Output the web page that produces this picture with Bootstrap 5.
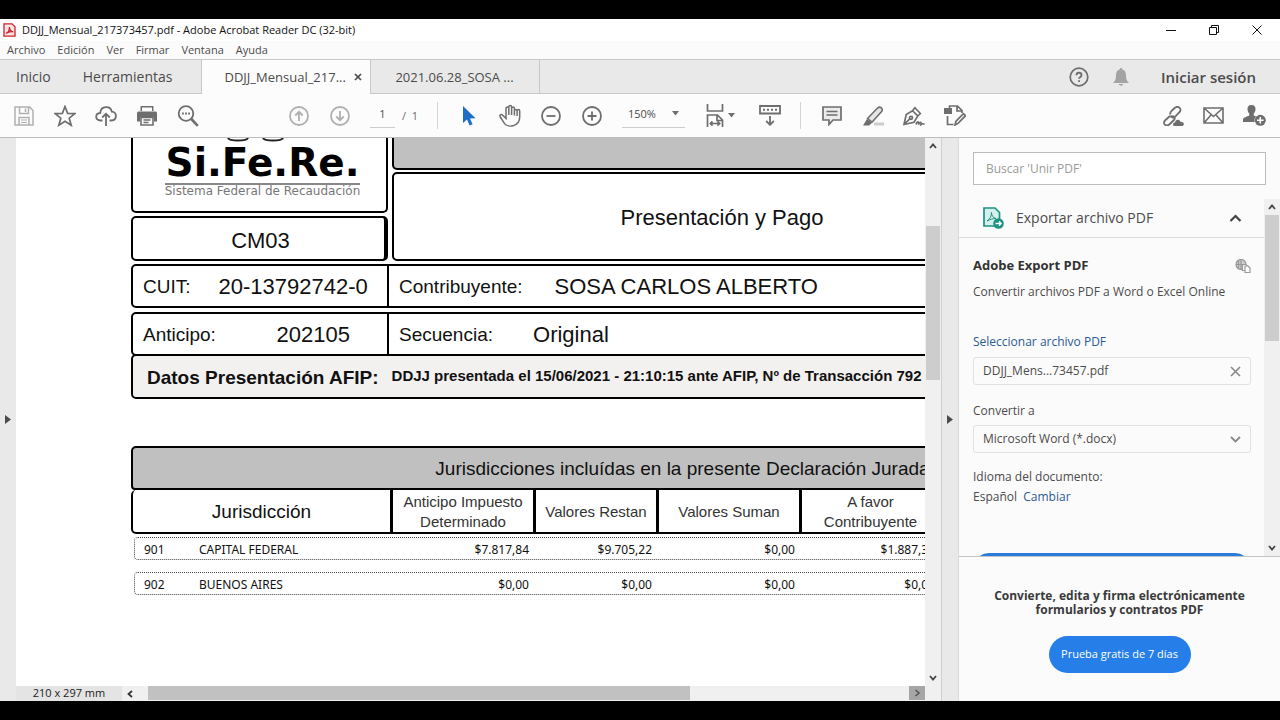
<!DOCTYPE html>
<html lang="es">
<head>
<meta charset="utf-8">
<meta name="viewport" content="width=device-width, initial-scale=1">
<title>DDJJ_Mensual_217373457.pdf - Adobe Acrobat Reader DC (32-bit)</title>
<link rel="stylesheet" href="https://cdn.jsdelivr.net/npm/bootstrap@5.3.0/dist/css/bootstrap.min.css">
<style>
  :root { --ink: #4b4b4b; --icon: #6e6e6e; --pale: #b0b0b0; --chrome: #e9e9e9; --line: #c8c8c8; --blue: #267ee8; }
  body { background: #000; color: var(--ink); font-family: "Open Sans", "Noto Sans", sans-serif; font-size: 12px; line-height: 16px; padding: 19px 0; }
  button { background: none; border: 0; padding: 0; color: inherit; }
  svg { display: block; fill: none; stroke: currentColor; flex: none; }
  .solid { fill: currentColor; stroke: none; }
  .window { background: #fcfcfc; }

  .titlebar { height: 22px; background: #fff; color: #111; font-size: 11px; padding: 0 2px 0 3px; }
  .titlebar span { padding-left: 6px; }
  .titlebar button { width: 43px; height: 20px; }
  .menubar { height: 19px; border-bottom: 1px solid var(--line); padding-left: 7px; gap: 12px; font-size: 11px; background: #fbfbfb; }
  .tabstrip { height: 34px; background: var(--chrome); border-bottom: 1px solid var(--line); font-size: 14px; }
  .tabstrip .doc-tab { border-right: 1px solid var(--line); height: 33px; width: 169px; font-size: 13px; }
  .tabstrip .is-open { background: #fcfcfc; height: 34px; border-left: 1px solid var(--line); width: 170px; padding-left: 23px; }
  .signin { font-size: 15px; font-weight: 600; }

  .toolbar { height: 44px; border-bottom: 1px solid #bdbdbd; padding: 0 5px 0 3px; color: var(--icon); font-size: 11px; }
  .tool { width: 41px; height: 40px; flex: none; display: flex; align-items: center; justify-content: center; }
  .group-gap { margin-left: 70px; }
  .pale { color: var(--pale); }
  .split { width: 1px; height: 27px; background: #d5d5d5; margin: 0 10px; }
  .page-no { width: 25px; border: 0; border-bottom: 1px solid #ccc; background: none; text-align: center; padding: 2px 0 5px; margin-left: 10px; color: var(--ink); }
  .page-total { width: 32px; padding-left: 7px; white-space: nowrap; }
  .zoom-pick { border-bottom: 1px solid #ccc; width: 63px; margin: 0 15px 0 10px; padding: 2px 6px 5px; }
  select { appearance: none; border: 0; background: none; color: var(--ink); width: 100%; outline: 0; padding: 0; }

  .rail { width: 16px; background: var(--chrome); }
  .rail-right { width: 18px; border-left: 1px solid #cfcfcf; border-right: 1px solid #dadada; }
  .vbar { width: 16px; background: #f0f0f0; padding: 4px 0; }
  .vbar .thumb { background: #cdcdcd; width: 14px; }
  .statusbar { height: 15px; background: #f0f0f0; font-size: 11px; line-height: 14px; color: #222; }
  .statusbar .size { width: 106px; background: #e4e4e4; text-align: center; }
  .statusbar .prev { width: 26px; }
  .statusbar .thumb { width: 542px; background: #c1c1c1; height: 14px; }
  .statusbar .next { width: 16px; height: 14px; background: #a6a6a6; color: #555; }

  .paper { background: #fff; color: #111; font-family: "Liberation Sans", Arial, sans-serif; }
  .sheet { width: 1109px; margin-left: 115px; font-size: 19px; line-height: 24px; }
  .box { border: 2px solid #000; border-radius: 5px; background: #fff; display: flex; align-items: center; }
  .side { width: 257px; flex: none; }
  .big { font-size: 22px; }
  .fill-gray { background: #c0c0c0; }
  .logo { height: 75px; border-top: 0; border-radius: 0 0 5px 5px; flex-direction: column; padding-left: 6px; }
  .logo-name { font: bold 39px/40px "DejaVu Sans", sans-serif; color: #000; }
  .logo-sub { font: 12px/12px "DejaVu Sans", sans-serif; color: #777; border-top: 2px solid #888; }
  .code { height: 45px; border-right-width: 4px; margin-top: 3px; padding: 4px 0 0 4px; }
  .heading { height: 32px; border-top: 0; border-radius: 0 0 5px 5px; width: 660px; }
  .purpose { height: 89px; width: 660px; margin-top: 2px; padding-top: 2px; }
  .datarow { height: 44px; margin-top: 4px; }
  .datarow.first-row { margin-top: 3px; }
  .cell { height: 100%; display: flex; align-items: center; padding: 2px 0 0 10px; }
  .cell.side { width: 256px; border-right: 2px solid #000; }
  .period { padding-right: 37px; }
  .datarow.afip { height: 45px; background: #f3f0f0; font-weight: bold; padding: 2px 0 0 14px; margin-top: -2px; gap: 13px; white-space: nowrap; }
  .afip small { font-size: 15px; line-height: 20px; padding-bottom: 4px; }

  .tax { width: 1109px; table-layout: fixed; border-collapse: separate; border-spacing: 0; margin-top: 47px; }
  .tax th { font-weight: normal; text-align: center; }
  .tax .caption-cell { height: 44px; background: #c0c0c0; border: 2px solid #000; border-radius: 5px 5px 4px 4px; padding: 2px 6px 0 0; }
  .tax .heads th { height: 44px; border-bottom: 2px solid #000; border-right: 3px solid #000; font-size: 15px; line-height: 20px; padding: 2px 0 0; color: #333; }
  .tax .heads th:first-child { font-size: 19px; border-left: 2px solid #000; border-radius: 5px 0 0 5px; color: #111; }
  .tax tbody tr { font: 12px/14px "Noto Sans", sans-serif; }
  .tax tbody td, .tax tbody th { height: 35px; padding: 4px 7px 8px 0; text-align: right; vertical-align: middle; white-space: nowrap; }
  .tax tbody th { position: relative; text-align: left; padding-left: 13px; }
  .tax tbody th::before { content: ""; position: absolute; top: 3px; left: 3px; height: 23px; width: 1106px; border: 1px dotted #444; border-radius: 4px; }
  .tax tbody th span { display: inline-block; width: 55px; }

  .panel { width: 321px; background: #fbfbfb; }
  .search { margin: 14px; height: 33px; border: 1px solid #bcbcbc; border-radius: 0; padding: 0 12px; background: #fff; flex: none; }
  .search::placeholder { color: #9a9a9a; }
  .panel-head { height: 39px; border-bottom: 1px solid #dcdcdc; padding: 0 22px 0 24px; font-size: 14px; }
  .panel-body { padding: 18px 13px 0 14px; height: 318px; overflow: hidden; }
  .panel-body h2 { font-size: 13px; font-weight: bold; line-height: 18px; color: #333; margin: 0 0 2px; }
  .panel-body a { color: #2b5a94; text-decoration: none; }
  .pick { margin: 34px 0 7px; }
  .panel-body label { display: block; margin: 18px 0 6px; }
  .field { height: 28px; border: 1px solid #e1e1e1; border-radius: 3px; padding: 0 9px; }
  .cta { background: #2b7ade; height: 32px; border-radius: 16px; }
  .offer { border-top: 1px solid #c4c4c4; padding-top: 32px; }
  .offer p { font-size: 12px; font-weight: bold; line-height: 14px; color: #3a3a3a; margin: 0 0 19px; }
  .trial, .trial:hover { background: var(--blue); color: #fff; border-radius: 19px; height: 37px; width: 142px; font-size: 11px; border: 0; padding: 0; }
</style>
</head>
<body class="vh-100 d-flex flex-column overflow-hidden">
<div class="window d-flex flex-column flex-grow-1 overflow-hidden">

  <header class="titlebar d-flex align-items-center">
    <svg width="13" height="14" viewBox="0 0 13 14" color="#c8232c" stroke-width="1.3"><path fill="#fbe3e3" d="M1 .8h8l3 3v9.4H1z"/><path d="M3 10.500c2-1 3.600-4 3.500-6.600M6.500 4c0 2.500 1.500 4.500 3.800 4.800M3 10.500c2-1.500 5-2.200 7.300-1.700"/></svg>
    <span class="me-auto text-nowrap">DDJJ_Mensual_217373457.pdf - Adobe Acrobat Reader DC (32-bit)</span>
    <button class="d-flex align-items-center justify-content-center" aria-label="Minimizar"><svg width="10" height="10"><path d="M0 5.500h10"/></svg></button>
    <button class="d-flex align-items-center justify-content-center" aria-label="Restaurar"><svg width="10" height="10"><path d="M.5 2.500h7v7h-7zM2.500 2.500v-2h7v7h-2"/></svg></button>
    <button class="d-flex align-items-center justify-content-center" aria-label="Cerrar"><svg width="10" height="10"><path d="M.5.500l9 9M9.500.500l-9 9"/></svg></button>
  </header>

  <nav class="menubar d-flex align-items-center" aria-label="Menú">
    <button>Archivo</button><button>Edición</button><button>Ver</button><button>Firmar</button><button>Ventana</button><button>Ayuda</button>
  </nav>

  <nav class="tabstrip d-flex align-items-start" aria-label="Documentos">
    <div class="d-flex align-self-center ps-3"><button class="me-4 pe-2">Inicio</button><button class="me-4 pe-1">Herramientas</button></div>
    <div class="doc-tab is-open d-flex align-items-center gap-2"><button>DDJJ_Mensual_217...</button><button aria-label="Cerrar pestaña"><svg width="8" height="8" stroke-width="1.700"><path d="M1 1l6 6M7 1L1 7"/></svg></button></div>
    <button class="doc-tab text-center">2021.06.28_SOSA ...</button>
    <div class="ms-auto me-4 d-flex align-items-center align-self-center">
      <button aria-label="Ayuda" class="me-4"><svg width="20" height="20" color="#6e6e6e" stroke-width="1.700"><circle cx="10" cy="10" r="8.800"/><path d="M7.500 8.200c0-3.200 5-3.200 5 0 0 1.800-2.400 1.700-2.400 3.600M10.100 13.200v1.800" stroke-width="1.900"/></svg></button>
      <button aria-label="Notificaciones" class="me-4"><svg class="solid" color="#a3a3a3" width="16" height="18" viewBox="0 0 16 18"><path d="M8 0c.9 0 1.300.6 1.300 1.400C12 2 13 4.200 13 7c0 4 .7 6 3 8H0c2.300-2 3-4 3-8 0-2.800 1-5 3.700-5.600C6.700.600 7.100 0 8 0zM5.700 16h4.600c-.4 2.200-4.200 2.200-4.600 0z"/></svg></button>
      <button class="signin ms-2">Iniciar sesión</button>
    </div>
  </nav>

  <div class="toolbar d-flex align-items-center flex-shrink-0">
    <button class="tool pale" aria-label="Guardar"><svg width="20" height="20" stroke-width="1.500"><path d="M1 1h14.500L19 4.500V19H1zM5.500 1v6.500h9V1M5 19v-7.500h10V19M11.500 2.500v3.500"/><path d="M7 14h6M7 16.500h6" stroke-width="1"/></svg></button>
    <button class="tool" aria-label="Favoritos"><svg width="22" height="22" stroke-width="1.700"><path d="M11 1.500l2.600 6.800 7.300.3-5.700 4.600 2 7L11 16.200l-6.200 4 2-7L1.100 8.600l7.300-.3z"/></svg></button>
    <button class="tool" aria-label="Subir"><svg width="22" height="20" stroke-width="1.800"><path d="M7.500 14.500H5.600C-.400 14.300 0 7.300 5.200 7c.6-7.600 10.400-7.600 11.600-1.300 5.400.2 5.700 8.600-.4 8.800h-1.900M11 20V8M7.200 11.500L11 7.700l3.800 3.800"/></svg></button>
    <button class="tool" aria-label="Imprimir"><svg width="20" height="20"><path class="solid" d="M3.500 0h13v5h-13zM1.500 5.500h17A1.500 1.500 0 0120 7v8.500h-3V11H3v4.500H0V7a1.500 1.500 0 011.500-1.500z"/><path fill="#fcfcfc" stroke="none" d="M5 1.500h10v3.500H5z"/><path d="M4 11.500h12V19H4zM6.500 14h7M6.500 16.500h5" stroke-width="1.600"/></svg></button>
    <button class="tool" aria-label="Buscar"><svg width="22" height="22" stroke-width="1.800"><circle cx="9" cy="8.500" r="7.300"/><path d="M14.300 14l6.500 6.800" stroke-width="2.600"/><path d="M5 8.500h1.800M8.100 8.500h1.800M11.200 8.500H13" stroke-width="1.800"/></svg></button>
    <button class="tool pale group-gap" aria-label="Página anterior"><svg width="20" height="20" stroke-width="1.800"><circle cx="10" cy="10" r="9"/><path d="M10 15V6M6.300 9.500L10 5.800l3.700 3.700"/></svg></button>
    <button class="tool pale" aria-label="Página siguiente"><svg width="20" height="20" stroke-width="1.800"><circle cx="10" cy="10" r="9"/><path d="M10 5v9M6.300 10.500l3.700 3.700 3.700-3.700"/></svg></button>
    <input class="page-no" aria-label="Página" value="1"><span class="page-total">/&nbsp; 1</span>
    <span class="split"></span>
    <button class="tool" aria-label="Seleccionar"><svg width="14" height="20" color="#1f6fc9" class="solid"><path d="M1 0v17l4-3.500 2.600 6 3-1.300L8 12.500l5.500-.2z"/></svg></button>
    <button class="tool" aria-label="Mano"><svg width="22" height="23" stroke-width="1.500"><path d="M7 12V4.500c0-2 2.800-2 2.800 0V3c0-2 2.800-2 2.800 0v1.500c0-2 2.800-2 2.800 0V7c0-2 2.700-1.900 2.700 0M9.800 4.500V11M12.600 4v7M15.400 6v5.500M18.100 7c0-1.900 2.600-1.900 2.600 0v6c0 10-12.500 11.500-15.800 5.600L1.300 13c-1.200-2.200 1.200-3.400 2.500-1.800L7 14.500V12M18.100 7v5"/></svg></button>
    <button class="tool" aria-label="Alejar"><svg width="20" height="20" stroke-width="1.800"><circle cx="10" cy="10" r="9"/><path d="M5.500 10h9"/></svg></button>
    <button class="tool" aria-label="Acercar"><svg width="20" height="20" stroke-width="1.800"><circle cx="10" cy="10" r="9"/><path d="M5.500 10h9M10 5.500v9"/></svg></button>
    <label class="zoom-pick d-flex align-items-center"><select aria-label="Zoom"><option>150%</option></select><svg class="solid" width="7" height="5"><path d="M0 0h7L3.500 4.500z"/></svg></label>
    <button class="tool gap-1" aria-label="Ajustar página"><svg width="18" height="23" stroke-width="1.700"><path d="M1.500 0v7h15V0M1.500 23V11h10l5 5v7M11 11v5.500h5.500M4.500 19.500h9M6.500 17.300l-2.200 2.200 2.200 2.200M11.500 17.300l2.200 2.200-2.200 2.200"/></svg><svg class="solid" width="7" height="5"><path d="M0 0h7L3.500 4.500z"/></svg></button>
    <button class="tool ms-2" aria-label="Desplazamiento"><svg width="22" height="21" stroke-width="1.800"><path d="M1 1h20v7.500H1zM11 11v9M7.200 16l3.800 3.800 3.800-3.800"/><path d="M4 4.800h14" stroke-dasharray="2 2" stroke-width="2"/></svg></button>
    <span class="split"></span>
    <button class="tool" aria-label="Comentario"><svg width="20" height="20" stroke-width="1.700"><path fill="#ebebeb" d="M1 1h18v13h-8l-4 4.500V14H1z"/><path d="M4.500 5.500h11M4.500 9h11" stroke-width="1.300"/></svg></button>
    <button class="tool" aria-label="Resaltar"><svg width="22" height="20" stroke-width="1.600"><path d="M12 18h10" style="stroke:#ccc" stroke-width="3"/><path fill="#e4e4e4" d="M5.500 12.500L15.800 1.800c2.500-1.800 5.500.8 4 3.500L10 16.200z"/><path class="solid" d="M5 13l5 4-3 2.500H1z"/></svg></button>
    <button class="tool" aria-label="Firmar"><svg width="22" height="20" stroke-width="1.700"><path d="M1 18.500L3.200 8.500l6.300-3.800 5.300 5.300-3.800 6.300zM1.500 18l5.800-5.600M9.500 4.700L12.500 1M14.800 10l3.200-3M12 2l5 5M13 18.500c1-3.500 3-3.500 2.500 0 1.500-3 3-2.500 2.500 0 1-1 2-1 3.500-.3"/><circle cx="8" cy="11.800" r="1.500"/></svg></button>
    <button class="tool" aria-label="Editar"><svg width="22" height="21" stroke-width="1.700"><path class="solid" d="M0 3h8v6H0z"/><path d="M5.500 3V1h8l4.500 4.500V8M13 1v5h5M3.500 11v8.500h6M11 20l1-3.800 7.500-7.500 2 2-7.500 7.700z"/></svg></button>
    <button class="tool ms-auto" aria-label="Compartir vínculo"><svg width="22" height="20" stroke-width="1.800"><path d="M8 10l-4.500 4c-4 3.500.8 7.500 4.300 4L12 14c1.800-2-.5-5-3-3.300M8.500 8.500c-1-2 .3-3 1.500-4l2.700-2.500c3.600-3 8 1 4.500 4.500l-4 4.200c-2 1.800-4.500.6-4.500-1.200"/><path class="solid" d="M12.500 20c-2.500-.5-1.500-3.500.5-3.500.5-3.500 4.500-3.500 5.300-.8 4-.4 4.500 3.600 2.200 4.300z"/></svg></button>
    <button class="tool" aria-label="Correo"><svg width="21" height="17" stroke-width="1.600"><path d="M1 1h19v15H1zM1 1l9.500 8.500L20 1M1 16l7-8M20 16l-7-8"/></svg></button>
    <button class="tool" aria-label="Agregar persona"><svg width="23" height="21"><path class="solid" d="M8.500 0c3 0 4.200 2 4 4.500-.2 2-.8 3-1.800 4v2l2.500 1c-2 2-2 3.500-1.500 5.500H0v-2.500c0-2 4-3 6.300-4v-2c-1-1-1.600-2-1.800-4C4.300 2 5.500 0 8.500 0z"/><circle class="solid" cx="17.300" cy="15.300" r="5.500"/><path d="M14 15.300h6.600M17.300 12v6.600" stroke="#fff" stroke-width="1.500"/></svg></button>
  </div>

  <div class="d-flex flex-grow-1 overflow-hidden">
    <div class="rail d-flex align-items-center justify-content-center flex-shrink-0"><button aria-label="Abrir panel izquierdo"><svg class="solid" width="6" height="9"><path d="M0 0v9l6-4.500z"/></svg></button></div>

    <main class="d-flex flex-column flex-grow-1 overflow-hidden">
      <div class="d-flex flex-grow-1 overflow-hidden">
        <div class="paper flex-grow-1 overflow-hidden">
          <div class="sheet">
            <div class="d-flex gap-1">
              <div class="side">
                <div class="box logo">
                  <svg width="72" height="5" color="#222" stroke-width="2"><path d="M1 0c1 2 4 2.500 10 2.500S20 2 21 0M36 0c1 2 4 2.500 10 2.500S55 2 56 0"/></svg>
                  <div class="logo-name">Si.Fe.Re.</div>
                  <div class="logo-sub">Sistema Federal de Recaudación</div>
                </div>
                <div class="box code big justify-content-center">CM03</div>
              </div>
              <div>
                <div class="box heading fill-gray"></div>
                <div class="box purpose big justify-content-center">Presentación y Pago</div>
              </div>
            </div>
            <div class="box datarow first-row">
              <div class="cell side"><span>CUIT:</span><span class="big ms-4 ps-1">20-13792742-0</span></div>
              <div class="cell"><span>Contribuyente:</span><span class="big ms-4 ps-2">SOSA CARLOS ALBERTO</span></div>
            </div>
            <div class="box datarow">
              <div class="cell side"><span>Anticipo:</span><span class="big ms-auto period">202105</span></div>
              <div class="cell"><span>Secuencia:</span><span class="big ms-3 ps-4">Original</span></div>
            </div>
            <div class="box datarow afip">Datos Presentación AFIP: <small>DDJJ presentada el 15/06/2021 - 21:10:15 ante AFIP, Nº de Transacción 792</small></div>

            <table class="tax">
              <colgroup><col style="width:262px"><col style="width:143px"><col style="width:123px"><col style="width:143px"><col style="width:140px"><col></colgroup>
              <thead>
                <tr><th class="caption-cell" colspan="6">Jurisdicciones incluídas en la presente Declaración Jurada</th></tr>
                <tr class="heads"><th>Jurisdicción</th><th>Anticipo Impuesto<br>Determinado</th><th>Valores Restan</th><th>Valores Suman</th><th>A favor<br>Contribuyente</th><th></th></tr>
              </thead>
              <tbody>
                <tr><th><span>901</span>CAPITAL FEDERAL</th><td>$7.817,84</td><td>$9.705,22</td><td>$0,00</td><td>$1.887,38</td><td></td></tr>
                <tr><th><span>902</span>BUENOS AIRES</th><td>$0,00</td><td>$0,00</td><td>$0,00</td><td>$0,00</td><td></td></tr>
              </tbody>
            </table>
          </div>
        </div>
        <div class="vbar d-flex flex-column align-items-center flex-shrink-0">
          <svg width="8" height="8" color="#444" stroke-width="1.800"><path d="M1 6l3-3.500L7 6"/></svg>
          <div class="thumb" style="height:154px;margin-top:76px"></div>
          <svg class="mt-auto" width="8" height="8" color="#444" stroke-width="1.800"><path d="M1 2l3 3.500L7 2"/></svg>
        </div>
      </div>
      <div class="statusbar d-flex flex-shrink-0">
        <span class="size">210 x 297 mm</span>
        <span class="prev ps-1 d-flex align-items-center"><svg width="8" height="8" color="#333" stroke-width="1.800"><path d="M6 1L2.500 4 6 7"/></svg></span>
        <span class="thumb"></span>
        <span class="next ms-auto d-flex align-items-center justify-content-center me-3"><svg width="8" height="8" stroke-width="1.600"><path d="M2.500 1L6 4 2.500 7"/></svg></span>
      </div>
    </main>

    <div class="rail rail-right d-flex align-items-center justify-content-center flex-shrink-0"><button aria-label="Cerrar panel derecho"><svg class="solid" width="6" height="9"><path d="M0 0v9l6-4.500z"/></svg></button></div>

    <aside class="panel d-flex flex-column flex-shrink-0">
      <input class="search" type="search" placeholder="Buscar 'Unir PDF'" aria-label="Buscar herramientas">
      <div class="d-flex">
        <div class="flex-grow-1">
          <button class="panel-head w-100 d-flex align-items-center">
            <svg width="21" height="22" color="#1d9284" stroke-width="1.700"><path fill="#d5f0ec" d="M1 1h11l4.500 4.500V19H1z"/><path d="M4 14c3-1.500 4.500-5 4.500-8.500 0 3 1.500 5.500 4.500 6-3 0-6 .8-9 2.500z" stroke-width="1"/><circle cx="15.500" cy="16.500" r="5.300" fill="#1d9284" stroke="none"/><path d="M12.500 16.500h5.500M16 14.300l2.200 2.200-2.200 2.200" stroke="#fff" stroke-width="1.300"/></svg>
            <span class="ms-2 ps-1">Exportar archivo PDF</span>
            <svg class="ms-auto" width="13" height="9" color="#444" stroke-width="2.200"><path d="M1.500 7l5-5 5 5"/></svg>
          </button>
          <div class="panel-body">
            <div class="d-flex justify-content-between align-items-center"><h2>Adobe Export PDF</h2>
              <svg width="16" height="14" color="#999" stroke-width="1.200"><circle cx="6" cy="5.500" r="5" fill="#ccc"/><path d="M1 5.500h10M6 .5v10M3.500 1v9"/><path fill="#fff" d="M7.500 5.500h3.500l1.500 1.500v4.500h-5z"/><path fill="#fff" d="M10 7h3l2 2v4.500h-5z"/></svg></div>
            <div class="pt-2 text-nowrap">Convertir archivos PDF a Word o Excel Online</div>
            <div class="pick"><a href="#">Seleccionar archivo PDF</a></div>
            <div class="field d-flex align-items-center justify-content-between">DDJJ_Mens...73457.pdf <button aria-label="Quitar archivo"><svg width="11" height="11" color="#888" stroke-width="1.600"><path d="M1 1l9 9M10 1l-9 9"/></svg></button></div>
            <label for="format">Convertir a</label>
            <div class="field d-flex align-items-center"><select id="format"><option>Microsoft Word (*.docx)</option></select><svg width="11" height="7" color="#888" stroke-width="1.800"><path d="M1 1l4.500 4.500L10 1"/></svg></div>
            <div class="mt-3">Idioma del documento:</div>
            <div class="pt-1">Español&nbsp; <a href="#">Cambiar</a></div>
            <button class="cta w-100 d-block mt-5" aria-label="Convertir"></button>
          </div>
        </div>
        <div class="vbar d-flex flex-column align-items-center flex-shrink-0">
          <svg width="8" height="8" color="#444" stroke-width="1.800"><path d="M1 6l3-3.500L7 6"/></svg>
          <div class="thumb mt-1" style="height:126px"></div>
          <svg class="mt-auto" width="8" height="8" color="#444" stroke-width="1.800"><path d="M1 2l3 3.500L7 2"/></svg>
        </div>
      </div>
      <div class="offer flex-grow-1 text-center">
        <p>Convierte, edita y firma electrónicamente<br>formularios y contratos PDF</p>
        <button class="btn trial">Prueba gratis de 7 días</button>
      </div>
    </aside>
  </div>
</div>
<script src="https://cdn.jsdelivr.net/npm/bootstrap@5.3.0/dist/js/bootstrap.bundle.min.js"></script>
</body>
</html>
